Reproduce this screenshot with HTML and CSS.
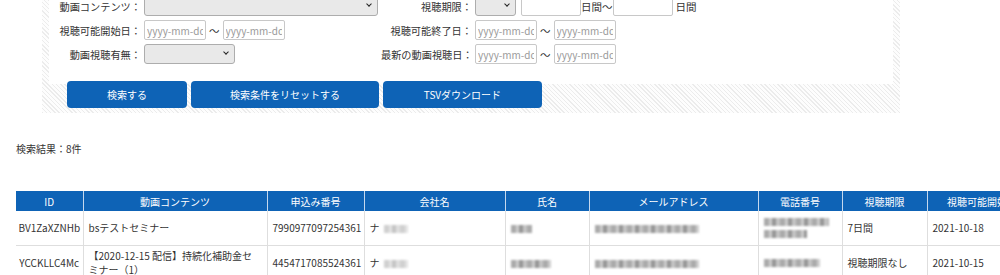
FILE: index.html
```html
<!DOCTYPE html>
<html lang="ja">
<head>
  <meta charset="UTF-8">
  <title>視聴者一覧</title>
  <link rel="stylesheet" href="styles.css">
</head>
<body>
  <div class="search-panel">
    <div class="search-box">
      <div class="search-grid">
        <label class="lbl">動画コンテンツ：</label>
        <div class="ctrl"><span class="sel sel-content"><select></select></span></div>
        <label class="lbl">視聴期限：</label>
        <div class="ctrl">
          <span class="sel sel-period"><select></select></span>
          <input class="txt days" type="text"><span>日間～</span><input class="txt days" type="text"><span class="unit">日間</span>
        </div>

        <label class="lbl">視聴可能開始日：</label>
        <div class="ctrl"><input class="txt date" type="text" placeholder="yyyy-mm-dd"><span class="tilde">～</span><input class="txt date" type="text" placeholder="yyyy-mm-dd"></div>
        <label class="lbl">視聴可能終了日：</label>
        <div class="ctrl"><input class="txt date" type="text" placeholder="yyyy-mm-dd"><span class="tilde">～</span><input class="txt date" type="text" placeholder="yyyy-mm-dd"></div>

        <label class="lbl">動画視聴有無：</label>
        <div class="ctrl"><span class="sel sel-watch"><select></select></span></div>
        <label class="lbl">最新の動画視聴日：</label>
        <div class="ctrl"><input class="txt date" type="text" placeholder="yyyy-mm-dd"><span class="tilde">～</span><input class="txt date" type="text" placeholder="yyyy-mm-dd"></div>
      </div>
    </div>
    <div class="btn-row">
      <button class="btn btn-search">検索する</button>
      <button class="btn btn-reset">検索条件をリセットする</button>
      <button class="btn btn-tsv">TSVダウンロード</button>
    </div>
  </div>

  <p class="result-count">検索結果：8件</p>

  <div class="table-wrap">
    <table class="list">
      <colgroup>
        <col class="w-id"><col class="w-content"><col class="w-apply"><col class="w-company"><col class="w-name">
        <col class="w-mail"><col class="w-tel"><col class="w-period"><col class="w-date">
      </colgroup>
      <thead>
        <tr>
          <th>ID</th><th>動画コンテンツ</th><th>申込み番号</th><th>会社名</th><th>氏名</th>
          <th>メールアドレス</th><th>電話番号</th><th>視聴期限</th><th>視聴可能開始日</th>
        </tr>
      </thead>
      <tbody>
        <tr>
          <td class="center">BV1ZaXZNHb</td>
          <td>bsテストセミナー</td>
          <td>7990977097254361</td>
          <td>ナ<span class="blur b-co"></span></td>
          <td><span class="blur b-s"></span></td>
          <td><span class="blur b-mail"></span></td>
          <td class="tel"><span class="blur b-tel"></span><span class="blur b-tel2"></span></td>
          <td>7日間</td>
          <td>2021-10-18</td>
        </tr>
        <tr>
          <td class="center">YCCKLLC4Mc</td>
          <td>【2020-12-15 配信】持続化補助金セミナー（1）</td>
          <td>4454717085524361</td>
          <td>ナ<span class="blur b-co"></span></td>
          <td><span class="blur b-m"></span></td>
          <td><span class="blur b-mail"></span></td>
          <td class="tel"><span class="blur b-tel3"></span></td>
          <td>視聴期限なし</td>
          <td>2021-10-15</td>
        </tr>
      </tbody>
    </table>
  </div>
</body>
</html>
```

FILE: styles.css
```css
body {
  margin: 0;
  font-family: "Noto Sans CJK JP", "Noto Sans", sans-serif;
  font-size: 10px;
  color: #333;
  background: #fff;
  overflow: hidden;
}
.search-panel {
  width: 844px;
  margin: -11px 0 0 42px;
  padding: 0 7px 5px;
  background: repeating-linear-gradient(45deg, #ececec 0 1px, #fdfdfd 1px 3px);
}
.search-box {
  background: #fff;
  padding: 7px 0 20px;
}
.search-grid {
  display: grid;
  grid-template-columns: 92px 234px 91px 1fr;
  column-gap: 3px;
  row-gap: 4px;
  align-items: center;
}
.lbl {
  font-size: 10.2px;
  text-align: right;
  white-space: nowrap;
}
.ctrl {
  display: flex;
  align-items: center;
  height: 20px;
  font-size: 10.5px;
}
.sel {
  position: relative;
  display: inline-block;
  height: 20px;
}
.sel select {
  appearance: none;
  width: 100%;
  height: 20px;
  margin: 0;
  border: 1px solid #adadad;
  border-radius: 3px;
  background: #e9e9e9;
}
.sel::after {
  content: "";
  position: absolute;
  right: 7px;
  top: 6px;
  width: 3px;
  height: 3px;
  border-right: 1.5px solid #222;
  border-bottom: 1.5px solid #222;
  transform: rotate(45deg);
  pointer-events: none;
}
.sel-content { width: 234px; }
.sel-period { width: 41px; margin-right: 5px; }
.sel-watch { width: 91px; }
.txt {
  box-sizing: border-box;
  height: 20px;
  margin: 0;
  padding: 0 2px;
  border: 1px solid #c8c8c8;
  border-radius: 2px;
  background: #fff;
  font-family: inherit;
  font-size: 10px;
  color: #333;
}
.txt::placeholder {
  color: #9a9a9a;
}
.date { width: 62px; }
.days { width: 60px; }
.tilde {
  margin: 0 3px;
}
.unit {
  margin-left: 3px;
}
.btn-row {
  display: flex;
  gap: 4px;
  margin: -3px 0 0 18px;
}
.btn {
  height: 27px;
  border: none;
  border-radius: 4px;
  background: #0e63b6;
  color: #fff;
  font-family: inherit;
  font-size: 10px;
}
.btn-search { width: 120px; }
.btn-reset { width: 188px; }
.btn-tsv { width: 159px; }
.result-count {
  margin: 28px 0 0 16px;
  line-height: 15px;
}
.table-wrap {
  margin: 35px 0 0 16px;
  overflow: hidden;
}
.list {
  table-layout: fixed;
  width: 1021px;
  border-collapse: collapse;
}
.w-id { width: 67px; }
.w-content { width: 184px; }
.w-apply { width: 97px; }
.w-company { width: 141px; }
.w-name { width: 84px; }
.w-mail { width: 169px; }
.w-tel { width: 84px; }
.w-period { width: 85px; }
.w-date { width: 110px; }
.list th {
  height: 20px;
  padding: 0 4px;
  background: #0e63b6;
  color: #fff;
  font-weight: normal;
  white-space: nowrap;
  overflow: hidden;
  border-right: 1px solid #c4d8ee;
}
.list td {
  height: 34px;
  padding: 0 5px;
  border: 1px solid #dedede;
  border-top: none;
  line-height: 14px;
}
.list td:first-child {
  border-left: none;
}
.list td.center {
  text-align: center;
  padding: 0 2px;
}
.blur {
  display: inline-block;
  height: 8px;
  vertical-align: middle;
  background: repeating-linear-gradient(90deg, #aaa 0 5px, #cdcdcd 5px 8px, #969696 8px 12px, #c4c4c4 12px 16px);
  filter: blur(0.8px);
}
.b-co { width: 24px; margin-left: 4px; opacity: 0.55; }
.b-s { width: 21px; }
.b-m { width: 40px; }
.b-mail { width: 104px; }
.tel .blur { display: block; margin: 4px 0; }
.b-tel { width: 65px; }
.b-tel2 { width: 43px; }
.b-tel3 { width: 56px; }
```
